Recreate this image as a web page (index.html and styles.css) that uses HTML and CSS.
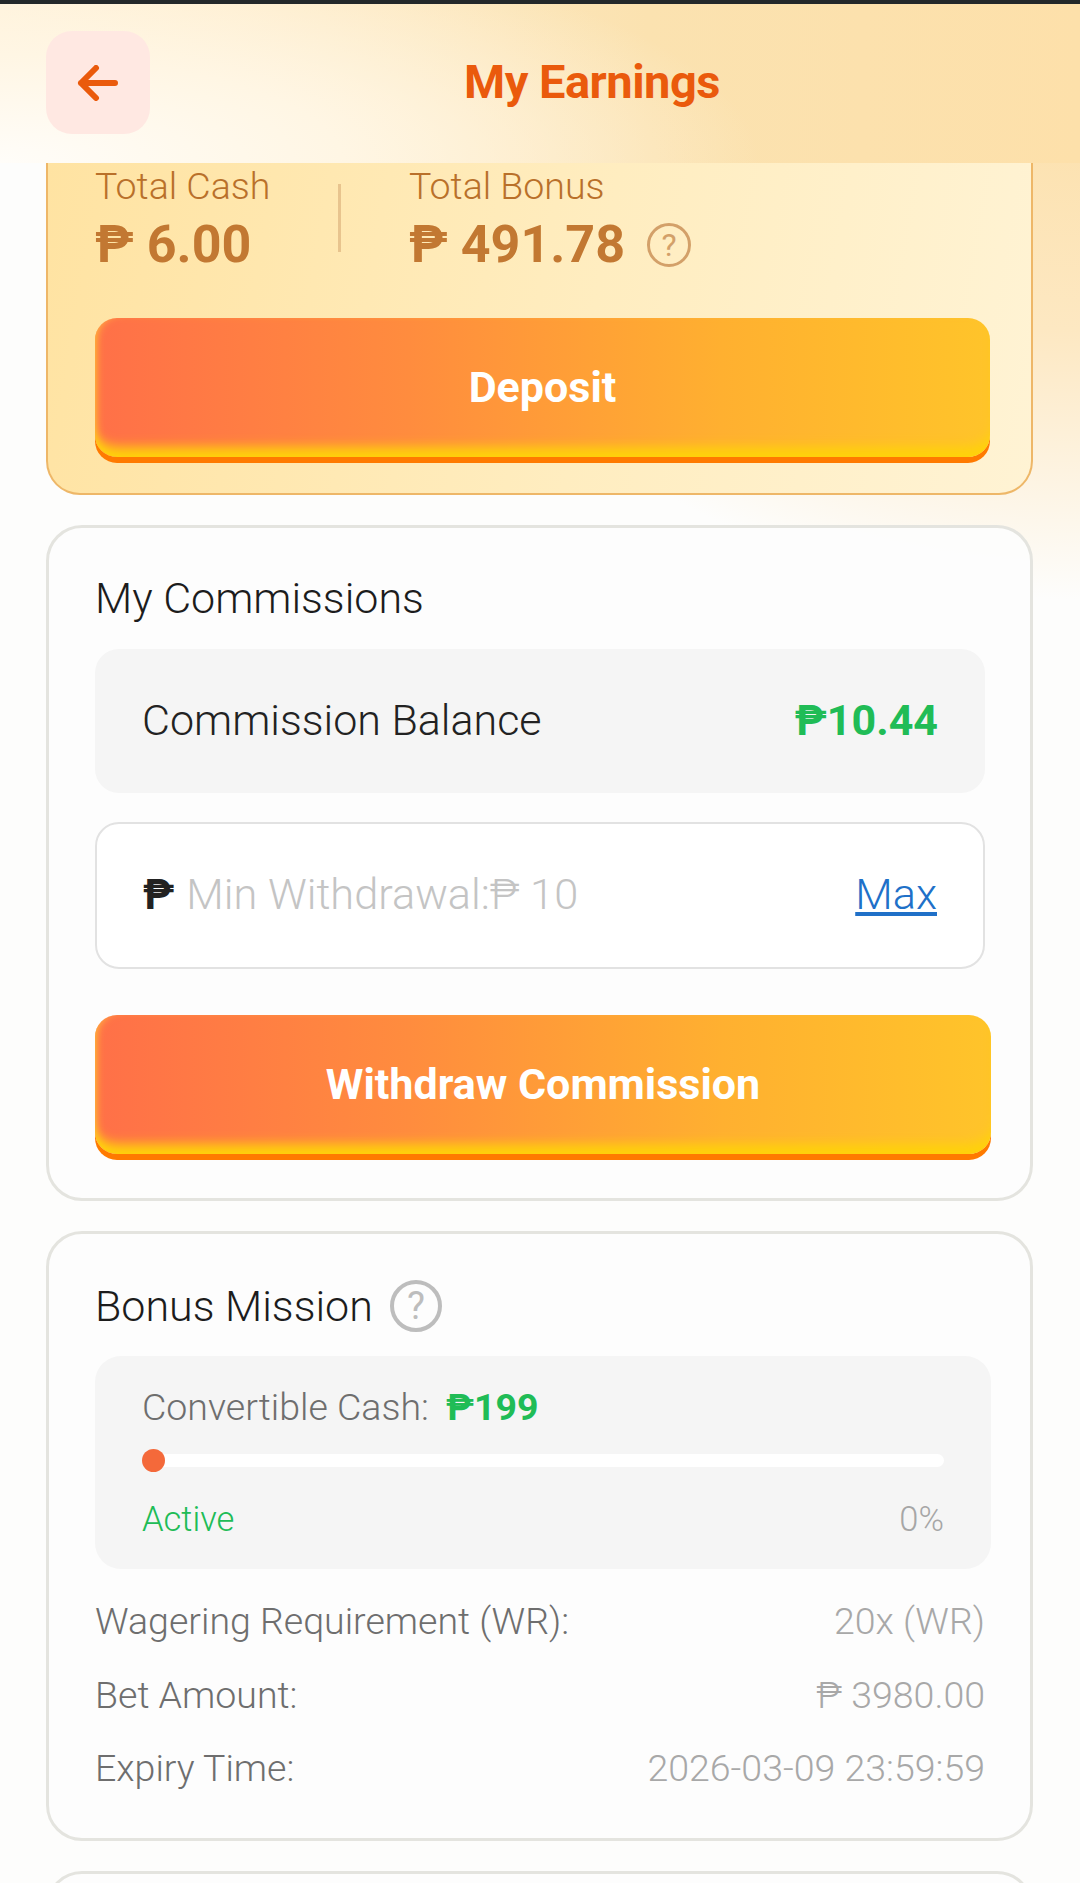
FILE: index.html
```html
<!DOCTYPE html>
<html lang="en">
<head>
<meta charset="UTF-8" />
<meta name="viewport" content="width=device-width, initial-scale=1" />
<title>My Earnings</title>
<link rel="stylesheet" href="styles.css">
</head>
<body>
  <div class="statusbar"></div>
  <header class="topbar">
    <button class="back" type="button" aria-label="Back">
      <svg width="42" height="36" viewBox="0 0 42 36" fill="none" stroke="#ea5a0c" stroke-width="6" stroke-linecap="round" stroke-linejoin="round">
        <path d="M4 18H38M19 3 4 18 19 33" />
      </svg>
    </button>
    <h1>My Earnings</h1>
  </header>

  <main class="page">
    <section class="card wallet">
      <div class="totals">
        <div class="total">
          <div class="total-label">Total Cash</div>
          <div class="total-value">₱ 6.00</div>
        </div>
        <div class="divider"></div>
        <div class="total">
          <div class="total-label">Total Bonus</div>
          <div class="total-value">₱ 491.78 <span class="help help-small">?</span></div>
        </div>
      </div>
      <button class="action" type="button">Deposit</button>
    </section>

    <section class="card commissions">
      <h2>My Commissions</h2>
      <div class="balance">
        <span>Commission Balance</span>
        <strong>₱10.44</strong>
      </div>
      <div class="withdraw-input">
        <span class="peso">₱</span>
        <span class="placeholder">Min Withdrawal:₱ 10</span>
        <a href="#" class="max">Max</a>
      </div>
      <button class="action action-wide" type="button">Withdraw Commission</button>
    </section>

    <section class="card mission">
      <h2>Bonus Mission <span class="help">?</span></h2>
      <div class="progress-box">
        <div class="convertible">Convertible Cash: <strong>₱199</strong></div>
        <div class="track"><div class="dot"></div></div>
        <div class="progress-foot">
          <span class="active">Active</span>
          <span class="percent">0%</span>
        </div>
      </div>
      <div class="row"><span>Wagering Requirement (WR):</span><span class="val">20x (WR)</span></div>
      <div class="row"><span>Bet Amount:</span><span class="val">₱ 3980.00</span></div>
      <div class="row"><span>Expiry Time:</span><span class="val">2026-03-09 23:59:59</span></div>
    </section>

    <section class="card next"></section>
  </main>
</body>
</html>
```

FILE: styles.css
```css
* {
  box-sizing: border-box;
}
body {
  margin: 0;
  height: 1883px;
  overflow: hidden;
  font-family: Roboto, "Noto Sans", sans-serif;
  font-weight: 300;
  background:
    radial-gradient(ellipse 700px 540px at 100% 60px, #fcdfa8 0%, #fde8c2 50%, rgba(255,255,255,0) 100%),
    #fdfdfc;
}
.statusbar {
  height: 4px;
  background: #23282a;
}
.topbar {
  height: 159px;
  padding: 27px 0 0 46px;
  display: flex;
  align-items: flex-start;
  background: radial-gradient(ellipse 760px 240px at 0% 100%, #fffdf9 0%, #fff6e4 45%, rgba(255,240,210,0) 100%), linear-gradient(90deg, #fff0d4 0%, #fbe2b0 60%, #fde0aa 100%);
}
.back {
  width: 104px;
  height: 103px;
  border: 0;
  border-radius: 26px;
  background: #ffe8e2;
  display: flex;
  align-items: center;
  justify-content: center;
  padding: 0;
}
.topbar h1 {
  margin: 0 0 0 314px;
  font-size: 47px;
  line-height: 101px;
  font-weight: 700;
  color: #ea5a0c;
  letter-spacing: -0.5px;
}
.page {
  padding: 0 47px 0 46px;
}
.card {
  border: 3px solid #e4e4df;
  border-radius: 36px;
  background: rgba(253,253,253,0.92);
  margin-bottom: 30px;
  padding: 0 46px;
}
.wallet {
  border: 2px solid #eeb768;
  border-top: 0;
  border-radius: 0 0 34px 34px;
  height: 332px;
  padding: 0 43px 0 47px;
  background: linear-gradient(100deg, #ffe3a2 0%, #ffedc0 55%, #fff3d4 100%);
}
.totals {
  display: flex;
  height: 155px;
}
.total {
  width: 243px;
}
.total-label {
  font-size: 37.5px;
  line-height: 46px;
  color: #b9702a;
}
.total-value {
  font-size: 52px;
  line-height: 66px;
  margin-top: 3px;
  font-weight: 700;
  color: #c27832;
  white-space: nowrap;
  display: flex;
  align-items: center;
}
.divider {
  width: 3px;
  height: 68px;
  margin-top: 21px;
  margin-right: 68px;
  background: #e8c48e;
}
.help {
  display: inline-flex;
  flex: none;
  align-items: center;
  justify-content: center;
  width: 52px;
  height: 52px;
  border: 4px solid #bdbdbd;
  border-radius: 50%;
  color: #bdbdbd;
  font-size: 38px;
  font-weight: 400;
  margin-left: 17px;
}
.help-small {
  width: 44px;
  height: 44px;
  border-width: 3px;
  border-color: #d3a069;
  color: #d3a069;
  font-size: 32px;
  margin-left: 22px;
}
.action {
  display: block;
  width: 895px;
  height: 139px;
  border: 0;
  border-radius: 22px;
  font-family: inherit;
  font-size: 43px;
  font-weight: 700;
  color: #fff;
  padding: 0 0 2px;
  background: linear-gradient(90deg, #ff7048 0%, #ff8c3e 35%, #ffb030 70%, #ffc42a 100%);
  box-shadow: 0 6px 0 #ff7a00, inset 0 -16px 12px -6px #ffd20a, inset 6px 0 8px -5px #ffc040;
}
.action-wide {
  width: 896px;
}
h2 {
  margin: 0;
  font-size: 43px;
  font-weight: 300;
  color: #1c1c1c;
  display: flex;
  align-items: center;
}
.commissions {
  height: 676px;
}
.commissions h2 {
  padding-top: 19px;
  height: 121px;
}
.balance {
  width: 890px;
  height: 144px;
  border-radius: 24px;
  background: #f5f5f5;
  padding: 0 47px 2px;
  display: flex;
  justify-content: space-between;
  align-items: center;
  font-size: 43px;
  color: #222;
}
.balance strong {
  font-weight: 700;
  color: #20bc56;
}
.withdraw-input {
  width: 890px;
  height: 147px;
  margin-top: 29px;
  border: 2px solid #e2e2e2;
  border-radius: 24px;
  background: #fff;
  padding: 0 46px 2px;
  display: flex;
  align-items: center;
  font-size: 43.3px;
}
.peso {
  font-weight: 700;
  font-size: 42px;
  color: #222;
  margin-right: 12px;
}
.placeholder {
  color: #c4c4c4;
  flex: 1;
}
.max {
  color: #2070c8;
}
.commissions .action {
  margin-top: 46px;
}
.mission {
  height: 610px;
}
.mission h2 {
  height: 122px;
  padding-top: 22px;
}
.progress-box {
  width: 896px;
  height: 213px;
  border-radius: 26px;
  background: #f5f5f5;
  padding: 30px 47px 0;
}
.convertible {
  font-size: 37.5px;
  line-height: 42px;
  color: #6e6e6e;
}
.convertible strong {
  color: #20bc56;
  font-weight: 700;
  margin-left: 8px;
}
.track {
  position: relative;
  height: 13px;
  margin-top: 26px;
  border-radius: 7px;
  background: #fff;
}
.dot {
  position: absolute;
  left: 0;
  top: -5px;
  width: 23px;
  height: 23px;
  border-radius: 50%;
  background: #f4693a;
}
.progress-foot {
  display: flex;
  justify-content: space-between;
  margin-top: 31px;
  font-size: 34.5px;
  line-height: 42px;
}
.active {
  color: #20bc56;
}
.percent {
  color: #a6a6a6;
}
.row {
  display: flex;
  justify-content: space-between;
  font-size: 37.5px;
  line-height: 73.5px;
  color: #6e6e6e;
  width: 890px;
}
.progress-box + .row {
  margin-top: 16px;
}
.val {
  color: #a8a8a8;
}
.next {
  height: 100px;
  margin-top: 2px;
}
```
